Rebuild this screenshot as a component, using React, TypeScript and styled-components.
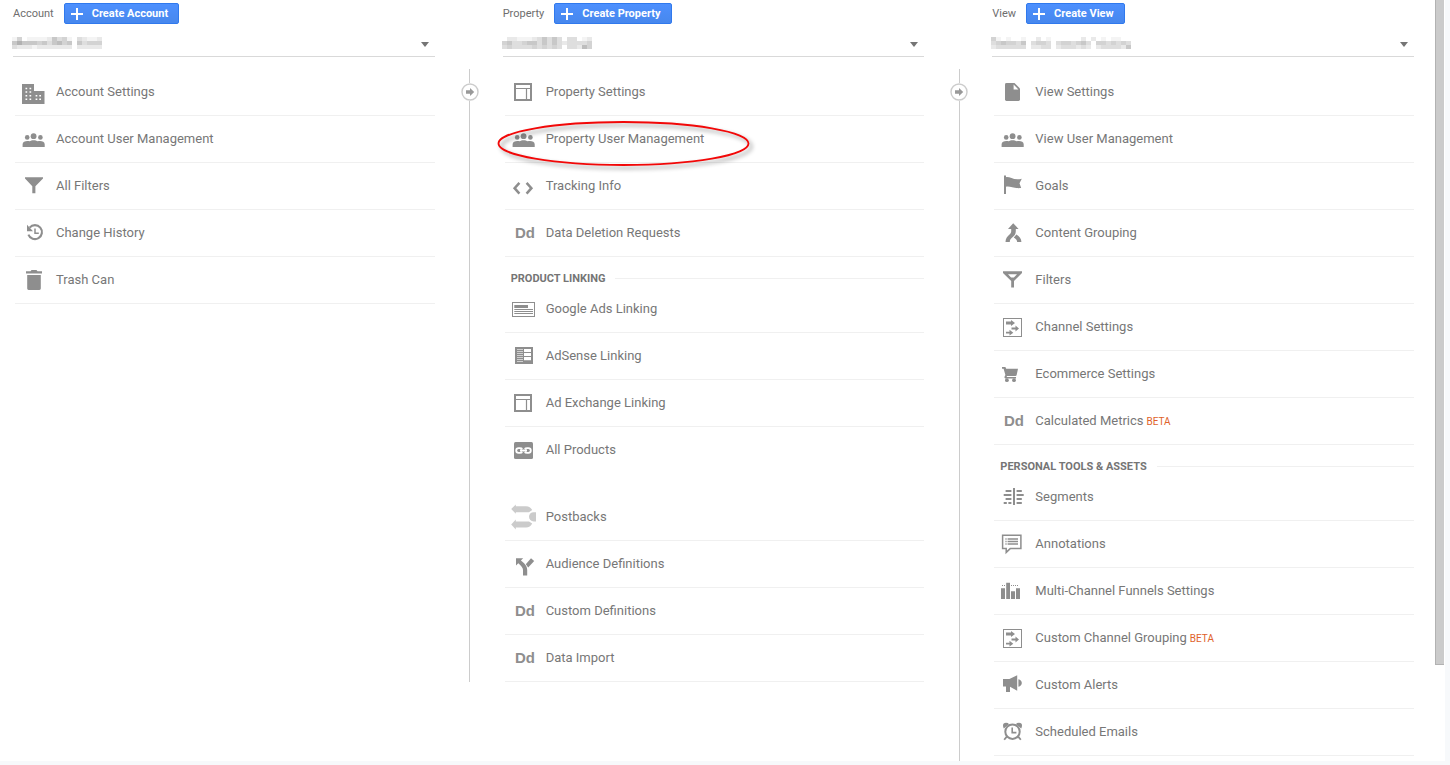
import React from "react";
import styled, { createGlobalStyle } from "styled-components";

const GlobalStyle = createGlobalStyle`
  * { box-sizing: border-box; }
  body {
    margin: 0;
    background: #f7f9fb;
    font-family: Roboto, "Liberation Sans", sans-serif;
    color: #757575;
  }
`;

const Page = styled.div`
  display: flex;
  min-height: 100vh;
  padding: 0 5px 4px 0;
`;

const Panel = styled.main`
  display: flex;
  flex: 1;
  padding-right: 1px;
  background: #fff;
`;

const Columns = styled.div`
  flex: 1;
  display: grid;
  grid-template-columns: 1fr 68px 1fr 68px 1fr;
  padding: 0 21px 0 13px;
`;

const LinkedColumns = styled.div`
  display: grid;
  grid-column: span 3;
  grid-template-columns: subgrid;
  align-self: start;
`;

const Column = styled.section<{ $last?: boolean }>`
  min-width: 0;
  padding-bottom: ${(p) => (p.$last ? 5 : 0)}px;
`;

const ColumnHead = styled.header`
  display: flex;
  align-items: center;
  gap: 10px;
  padding-top: 3px;
`;

const EntityLabel = styled.label`
  font-size: 11px;
  line-height: 20px;
  color: #6e6e6e;
`;

const CreateButton = styled.button`
  display: flex;
  align-items: center;
  gap: 9px;
  height: 21px;
  padding: 0 10px 0 6px;
  border: 1px solid #3079ed;
  border-radius: 2px;
  background: linear-gradient(#4d90fe, #4787ed);
  color: #fff;
  font: bold 11px/19px Roboto, "Liberation Sans", sans-serif;
  cursor: pointer;
`;

const Picker = styled.div`
  display: grid;
  align-items: center;
  height: 33px;
  margin-bottom: 12px;
  border-bottom: 1px solid #d9d9d9;

  > * { grid-area: 1 / 1; }

  &::after {
    content: "";
    grid-area: 1 / 1;
    justify-self: end;
    margin: 8px 6px 0 0;
    border: solid transparent;
    border-width: 5px 4px 0;
    border-top-color: #757575;
    pointer-events: none;
  }
`;

const Select = styled.select`
  width: 100%;
  height: 32px;
  border: 0;
  background: transparent;
  appearance: none;
`;

const Redaction = styled.svg`
  margin: 6px 0 0 -1px;
  pointer-events: none;
`;

const Menu = styled.ul`
  margin: 0;
  padding: 0 0 0 2px;
  list-style: none;
`;

const MenuItem = styled.li<{ $spaced?: boolean }>`
  position: relative;
  height: 47px;
  border-bottom: 1px solid ${(p) => (p.$spaced ? "transparent" : "#f0f0f0")};
  margin-bottom: ${(p) => (p.$spaced ? 20 : 0)}px;
`;

const MenuLink = styled.a`
  display: flex;
  align-items: center;
  gap: 10px;
  height: 46px;
  padding-left: 5px;
  color: #777;
  font-size: 13px;
  line-height: 20px;
  text-decoration: none;
`;

const Icon = styled.svg`
  flex: none;
  width: 26px;
  height: 26px;
  fill: #8e8e8e;
`;

const Beta = styled.small`
  margin-left: 3px;
  color: #e0622a;
  font-size: 10px;
`;

const GroupTitle = styled.li`
  display: flex;
  align-items: center;
  gap: 10px;
  padding: 14px 0 0 6px;
  font-size: 11px;
  font-weight: bold;
  line-height: 15px;

  &::after {
    content: "";
    flex: 1;
    border-top: 1px solid #f0f0f0;
  }
`;

const Highlight = styled.svg`
  position: absolute;
  left: -8px;
  top: 5px;
  overflow: visible;
  pointer-events: none;
  filter: drop-shadow(3px 3px 2px rgba(0, 0, 0, 0.4));
`;

const Divider = styled.div`
  display: flex;
  flex-direction: column;
  align-items: center;
  padding: 69px 0 0 2px;
`;

const Line = styled.div<{ $grow?: boolean }>`
  width: 1px;
  flex: ${(p) => (p.$grow ? "1" : "0 0 14px")};
  background: #ccc;
`;

const MoveButton = styled.button`
  display: block;
  width: 18px;
  height: 18px;
  padding: 0;
  border: 0;
  background: none;
  cursor: pointer;

  svg { display: block; }
`;

const ScrollTrack = styled.div`
  width: 9px;
`;

const ScrollThumb = styled.div`
  height: 87.4%;
  border: solid #b2b2b2;
  border-width: 0 0 1px 1px;
  background: #cbcbcb;
`;

const C = "#8e8e8e";

const dd = (
  <text
    x="5"
    y="18"
    fontFamily="'Liberation Sans', Arial, sans-serif"
    fontWeight="bold"
    fontSize="15"
  >
    Dd
  </text>
);

const layout = (
  <g fill="none" stroke={C}>
    <rect x="5" y="5" width="16" height="16" strokeWidth="2" />
    <path d="M5 9.5H21M16.5 9.5V21" strokeWidth="1.2" />
  </g>
);

const people = (
  <>
    <circle cx="13.6" cy="10.2" r="2.9" />
    <circle cx="7.2" cy="11.4" r="2.3" />
    <circle cx="20.4" cy="11.4" r="2.3" />
    <path d="M2.6 21V18.2C2.6 16 5 15 7.4 15C8.2 15 9 15.1 9.6 15.3C10.6 14.6 12 14.2 13.6 14.2C15.2 14.2 16.7 14.6 17.7 15.3C18.4 15.1 19.2 15 20 15C22.4 15 24.7 16 24.7 18.2V21Z" />
  </>
);

const channels = (
  <>
    <rect x="4.5" y="4.5" width="18" height="18" fill="none" stroke={C} />
    <path d="M7 7.5H12V6L16 9L12 12V10.5H7Z" />
    <path d="M12.5 13.5H16.5V11.5L20 14.5L16.5 17.5V15.5H12.5Z" />
    <path d="M7 17.8H10.5V15.8L14.3 18.7L10.5 21.6V19.6H7Z" />
  </>
);

const icons: Record<string, React.ReactNode> = {
  building: (
    <>
      <path d="M2 5H14V12H24.5V25H2Z" />
      <path
        d="M5.5 9.5H7.2M9.5 9.5H11.2M5.5 13H7.2M9.5 13H11.2M5.5 16.7H7.2M9.5 16.7H11.2M5.5 20.2H7.2M9.5 20.2H11.2M15.6 16.7H17.3M19.3 16.7H21M15.6 20.2H17.3M19.3 20.2H21"
        stroke="#fff"
        strokeWidth="1.4"
      />
    </>
  ),
  people,
  funnel: <path d="M5 4.3H23V5.6L15.4 13.2V20.2H12.3V13.2L5 5.6Z" />,
  history: (
    <>
      <path d="M9.6 7.6A7 7 0 1 1 8.4 14.6" fill="none" stroke={C} strokeWidth="2.1" />
      <path d="M7 4.8V11.2H13Z" />
      <path d="M15 8.6V13.2H18.8" fill="none" stroke={C} strokeWidth="1.5" />
    </>
  ),
  trash: <path d="M11.5 3H16.5L17.5 4.2H22V6.6H6V4.2H10.5ZM7.2 8H20.8V21.6Q20.8 23 19.4 23H8.6Q7.2 23 7.2 21.6Z" />,
  layout,
  code: <path d="M9.4 9.8L4.6 15.2L9.4 20.6M16.6 9.8L21.4 15.2L16.6 20.6" fill="none" stroke={C} strokeWidth="2.5" />,
  dd,
  ads: (
    <>
      <rect x="2.5" y="6.5" width="22" height="14" fill="none" stroke={C} />
      <path d="M4.3 9H18V12H4.3ZM4.3 13H23V14H4.3ZM4.3 15H23V16H4.3ZM4.3 17H23V18H4.3Z" />
    </>
  ),
  adsense: (
    <>
      <path d="M5 4H23V21H5Z" />
      <path d="M14 6H21V9H14ZM14 10H21V13H14ZM14 14H21V17.2H14Z" fill="#fff" />
      <path d="M7 6.5H13M7 8.5H13M7 10.5H13M7 12.5H13M7 14.5H13M7 16.5H13M7 18.5H13" stroke="#d0d0d0" />
    </>
  ),
  chain: (
    <>
      <rect x="4" y="5" width="19" height="17" rx="1.5" />
      <path
        d="M12.3 11.9C11.8 11.3 11 11.1 9.8 11.1H8.6A2.4 2.4 0 0 0 8.6 15.9H9.8C11 15.9 11.8 15.7 12.3 15.1M14.7 11.9C15.2 11.3 16 11.1 17.2 11.1H18.4A2.4 2.4 0 0 1 18.4 15.9H17.2C16 15.9 15.2 15.7 14.7 15.1M10 13.5H17"
        fill="none"
        stroke="#fff"
        strokeWidth="1.8"
      />
    </>
  ),
  postbacks: (
    <g fill="#cbcbcb">
      <path d="M1.2 5L5.8 0.4V2.2H16C19 2.2 20.8 3.6 22.2 6L19 8.2H5.8V9.8Z" />
      <path d="M1.2 20.4L5.8 15.6V17.4H19L22.2 19.4C20.8 22 19 23.4 16 23.4H5.8V25.4Z" />
      <path d="M26 8.2H23.6A4.6 4.6 0 0 0 23.6 17.4H26Z" />
    </g>
  ),
  split: (
    <>
      <path d="M6 7.2H13.2L10.9 9.6C14.2 12.2 17.2 14.9 17.2 19V24.6H13V19C13 16.6 11 14.6 8.3 12.2L6 14.4Z" />
      <path d="M15.8 13.3L21 7.2L24.2 10L18.2 16.4Z" />
    </>
  ),
  page: (
    <>
      <path d="M7.5 4H15.5L21 9.6V20.6Q21 22 19.6 22H7.4Q6 22 6 20.6V5.4Q6 4 7.5 4Z" />
      <path d="M14.6 5.6V10.4H19.4Z" fill="#fff" />
    </>
  ),
  flag: <path d="M5 2.4H7V4.2C11 3.4 14.4 7.8 22.8 5.8L20.5 10.3L22.2 15C14.6 15.8 11 12.8 7 13.8V21H5Z" />,
  merge: (
    <>
      <path d="M14.2 3.2L19.6 9H16.8V11.2C16.8 14.4 15.2 15.8 13.2 17.6C11.6 19 10.8 19.8 10.8 22H6.5C6.5 18.5 8.2 16.5 10.2 14.7C11.6 13.4 12.2 12.8 12.2 11.2V9H9Z" />
      <path d="M17.4 14.4C20.4 16.2 22.4 18.4 22.4 22H18.2C18.2 20.2 16.8 18.6 14.8 17.4Z" />
    </>
  ),
  outlineFunnel: (
    <path
      fillRule="evenodd"
      d="M4 4.3H23V6L15 14V20.4H12.2V14L4 6ZM9 7.2H18L14.9 10.6H12.1Z"
    />
  ),
  channels,
  cart: (
    <>
      <path d="M3 6H6.4L7.2 7.8H19L17.6 14.2Q17.3 15 16.4 15H8L7.6 16H17V17.4H6.2Q5 17 5.6 15.6L6.4 14L4.6 7.8H3Z" />
      <circle cx="7.9" cy="19.2" r="1.9" />
      <circle cx="15" cy="19.2" r="1.9" />
    </>
  ),
  segments: (
    <path d="M14 4H16V21H14ZM6.6 6H12.4V8H6.6ZM4.7 10H12.4V12H4.7ZM6.6 14H12.4V16H6.6ZM4.7 18H7.8V20H4.7ZM9.4 18H12.4V20H9.4ZM17.6 6H22.8V8H17.6ZM17.6 10H24.7V12H17.6ZM17.6 14H22.8V16H17.6ZM17.6 18H22.8V20H17.6Z" />
  ),
  annotation: (
    <>
      <path d="M3.6 4.2H21.9V17.6H11.2L7.2 21.4V17.6H3.6Z" fill="none" stroke={C} strokeWidth="1.5" />
      <path d="M6.4 8H7.6M8.6 8H19M6.4 10.5H7.6M8.6 10.5H19M6.4 13H7.6M8.6 13H19" stroke={C} strokeWidth="1.3" />
    </>
  ),
  bars: (
    <>
      <path d="M2 10.3H6V21H2ZM7.2 4.7H11V21H7.2ZM12 13.3H16V21H12ZM17 10.3H21V21H17Z" />
      <path d="M3 7.5H7M12 7.5H20" stroke={C} strokeDasharray="1 1" />
    </>
  ),
  megaphone: (
    <path d="M4 7H10.4L18.2 3.2V18.8L11 14.8V20H7V14.6H4ZM19.4 7.2Q22.8 8.2 22.8 11Q22.8 13.8 19.4 14.8Z" />
  ),
  alarm: (
    <>
      <circle cx="13.5" cy="12.7" r="7.2" fill="none" stroke={C} strokeWidth="2" />
      <path d="M4 6.4Q4 3.8 7 3.8Q9.4 3.8 10 5.2L4.8 9.6Q4 8 4 6.4ZM23 6.4Q23 3.8 20 3.8Q17.6 3.8 17 5.2L22.2 9.6Q23 8 23 6.4Z" />
      <path d="M13.2 8.4V13.6H17.4" fill="none" stroke={C} strokeWidth="1.6" />
      <path d="M7.8 17.6L5.2 20.8M19.2 17.6L21.8 20.8" stroke={C} strokeWidth="1.8" />
    </>
  ),
};

type Entry = {
  icon?: string;
  label: string;
  beta?: boolean;
  heading?: boolean;
  spaced?: boolean;
  highlighted?: boolean;
};

const accountMenu: Entry[] = [
  { icon: "building", label: "Account Settings" },
  { icon: "people", label: "Account User Management" },
  { icon: "funnel", label: "All Filters" },
  { icon: "history", label: "Change History" },
  { icon: "trash", label: "Trash Can" },
];

const propertyMenu: Entry[] = [
  { icon: "layout", label: "Property Settings" },
  { icon: "people", label: "Property User Management", highlighted: true },
  { icon: "code", label: "Tracking Info" },
  { icon: "dd", label: "Data Deletion Requests" },
  { heading: true, label: "PRODUCT LINKING" },
  { icon: "ads", label: "Google Ads Linking" },
  { icon: "adsense", label: "AdSense Linking" },
  { icon: "layout", label: "Ad Exchange Linking" },
  { icon: "chain", label: "All Products", spaced: true },
  { icon: "postbacks", label: "Postbacks" },
  { icon: "split", label: "Audience Definitions" },
  { icon: "dd", label: "Custom Definitions" },
  { icon: "dd", label: "Data Import" },
];

const viewMenu: Entry[] = [
  { icon: "page", label: "View Settings" },
  { icon: "people", label: "View User Management" },
  { icon: "flag", label: "Goals" },
  { icon: "merge", label: "Content Grouping" },
  { icon: "outlineFunnel", label: "Filters" },
  { icon: "channels", label: "Channel Settings" },
  { icon: "cart", label: "Ecommerce Settings" },
  { icon: "dd", label: "Calculated Metrics", beta: true },
  { heading: true, label: "PERSONAL TOOLS & ASSETS" },
  { icon: "segments", label: "Segments" },
  { icon: "annotation", label: "Annotations" },
  { icon: "bars", label: "Multi-Channel Funnels Settings" },
  { icon: "channels", label: "Custom Channel Grouping", beta: true },
  { icon: "megaphone", label: "Custom Alerts" },
  { icon: "alarm", label: "Scheduled Emails" },
];

// Mosaic cells that hide the names: 0 is white, 9 the darkest grey.
const accountMosaic = ["140111125341032112", "575554535645053444", "322212222222022222"];
const propertyMosaic = ["022111235353033012", "453345535353233334", "343333434343033264"];
const viewMosaic = ["4101001002010000002020101100", "3454435034430344345304434343", "2333333022330233323202333325"];

function Mosaic({ rows }: { rows: string[] }) {
  return (
    <Redaction width={rows[0].length * 5} height="12" aria-hidden="true">
      {rows.flatMap((row, y) =>
        row.split("").map((v, x) => {
          const g = 255 - Number(v) * 11;
          return <rect key={`${x}-${y}`} x={x * 5} y={y * 4} width="5" height="4" fill={`rgb(${g},${g},${g})`} />;
        })
      )}
    </Redaction>
  );
}

function AdminColumn(props: { name: string; mosaic: string[]; items: Entry[]; last?: boolean }) {
  const id = props.name.toLowerCase();
  return (
    <Column $last={props.last}>
      <ColumnHead>
        <EntityLabel htmlFor={id}>{props.name}</EntityLabel>
        <CreateButton type="button">
          <svg width="12" height="12" aria-hidden="true">
            <path d="M6 0V12M0 6H12" stroke="#fff" strokeWidth="2" />
          </svg>
          Create {props.name}
        </CreateButton>
      </ColumnHead>
      <Picker>
        <Select id={id}>
          <option value="" />
        </Select>
        <Mosaic rows={props.mosaic} />
      </Picker>
      <Menu>
        {props.items.map((item) =>
          item.heading ? (
            <GroupTitle key={item.label}>{item.label}</GroupTitle>
          ) : (
            <MenuItem key={item.label} $spaced={item.spaced}>
              <MenuLink href="#">
                <Icon viewBox="0 0 26 26" aria-hidden="true">{icons[item.icon!]}</Icon>
                <span>
                  {item.label}
                  {item.beta && <Beta>BETA</Beta>}
                </span>
              </MenuLink>
              {item.highlighted && (
                <Highlight width="253" height="45" aria-hidden="true">
                  <ellipse cx="126.5" cy="22.5" rx="125" ry="21.5" fill="none" stroke="#f20808" strokeWidth="1.8" />
                </Highlight>
              )}
            </MenuItem>
          )
        )}
      </Menu>
    </Column>
  );
}

function ColumnDivider() {
  return (
    <Divider>
      <Line />
      <MoveButton type="button" aria-label="Move">
        <svg width="18" height="18" aria-hidden="true">
          <circle cx="9" cy="9" r="8" fill="#fff" stroke="#ccc" strokeWidth="1.4" />
          <path d="M5 7.2H9V5L13.2 9L9 13V10.8H5Z" fill="#999" />
        </svg>
      </MoveButton>
      <Line $grow />
    </Divider>
  );
}

export default function App() {
  return (
    <>
      <GlobalStyle />
      <Page>
        <Panel>
          <Columns>
            <LinkedColumns>
              <AdminColumn name="Account" mosaic={accountMosaic} items={accountMenu} />
              <ColumnDivider />
              <AdminColumn name="Property" mosaic={propertyMosaic} items={propertyMenu} />
            </LinkedColumns>
            <ColumnDivider />
            <AdminColumn name="View" mosaic={viewMosaic} items={viewMenu} last />
          </Columns>
          <ScrollTrack>
            <ScrollThumb />
          </ScrollTrack>
        </Panel>
      </Page>
    </>
  );
}
